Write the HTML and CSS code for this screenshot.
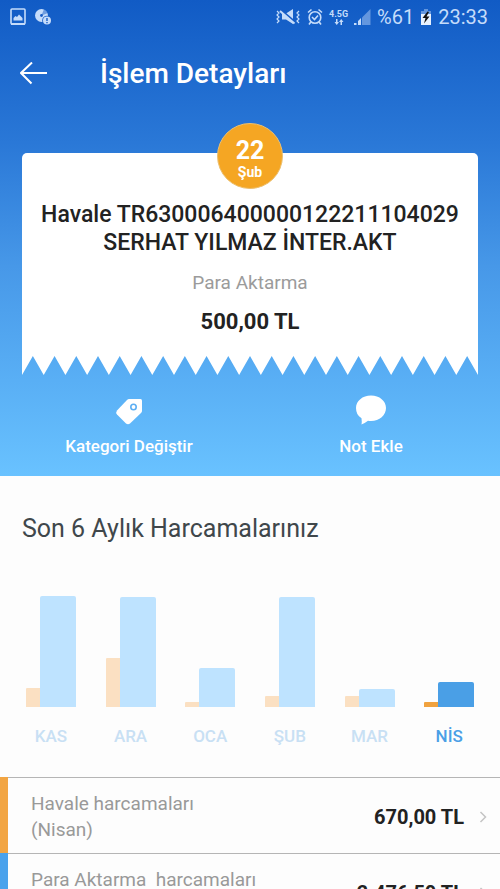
FILE: index.html
```html
<!DOCTYPE html>
<html lang="tr">
<head>
<meta charset="utf-8">
<meta name="viewport" content="width=device-width, initial-scale=1">
<title>İşlem Detayları</title>
<link rel="stylesheet" href="styles.css">
</head>
<body>
<div class="screen">
  <section class="hero">
    <div class="status">
      <div class="status-group">
        <svg width="16" height="18" viewBox="0 0 16 18"><rect x="1" y="1" width="14" height="15" rx="1" fill="none" stroke="currentColor" stroke-width="1.600"/><path d="M3.500 12.500V10L5.500 8l1.500 1 2-2.500 2 2 1.500 1.500v2.500zM1 15h14v2H1z" fill="currentColor"/></svg>
        <svg width="18" height="18" viewBox="0 0 18 18"><circle cx="7.500" cy="7.500" r="6.500" fill="currentColor"/><path d="M7.500 7.500L10 1l4 4z" fill="#175dc6" opacity=".5"/><circle cx="7.500" cy="7.500" r="1.400" fill="#175dc6"/><circle cx="13" cy="12.500" r="4.800" fill="#175dc6"/><circle cx="13" cy="12.500" r="4" fill="currentColor"/><path d="M13 10v3M13 14v1.200" stroke="#175dc6" stroke-width="1.400"/></svg>
      </div>
      <div class="status-group status-right">
        <svg width="26" height="18" viewBox="0 0 26 18"><path d="M7 5.500h4l7-4.500V16l-7-4.500H7z" fill="currentColor"/><path d="M5.500 1.500l14 12" stroke="#165cc6" stroke-width="2"/><path d="M5 3l14.500 12.500" stroke="currentColor" stroke-width="2"/><path d="M2 3l2 2-2 2 2 2-2 2 2 2-2 2M24 3l-2 2 2 2-2 2 2 2-2 2 2 2" fill="none" stroke="currentColor" stroke-width="1.200"/></svg>
        <svg width="16" height="18" viewBox="0 0 16 18"><circle cx="8" cy="9.500" r="5.800" fill="none" stroke="currentColor" stroke-width="1.600"/><path d="M1 4.500L4.500 1.500M15 4.500L11.500 1.500M3.800 14L2 16.500M12.200 14l1.800 2.500M5 9l2.500 2.500L11 7.500" fill="none" stroke="currentColor" stroke-width="1.600"/></svg>
        <span class="net"><span>4.5G</span><svg width="10" height="6" viewBox="0 0 10 6"><path d="M2 0h1.500v3H5L2.750 6 .500 3H2zM6.500 6H8V3h1.500L7.250 0 5 3h1.500z" fill="currentColor"/></svg></span>
        <svg width="17" height="18" viewBox="0 0 17 18"><path d="M16.500 1v16H8V9.500z" fill="currentColor" opacity=".45"/><path d="M0 17v-2h2.500v2zM4 17v-4l3-3v7z" fill="currentColor"/></svg>
        <span class="status-text">%61</span>
        <svg width="12" height="18" viewBox="0 0 12 18"><path d="M1 3h3V1h4v2h3v3H1z" fill="currentColor" opacity=".45"/><path d="M1 6h10v11H1z" fill="#e8f2ff"/><path d="M7.500 3.500L2.500 10h3L4 15.500 9.500 8.500H6.500L9 4z" fill="#111"/></svg>
        <span class="status-text">23:33</span>
      </div>
    </div>
    <header class="bar">
      <button class="back" type="button" aria-label="Geri"><svg width="28" height="24" viewBox="0 0 28 24"><path d="M27 11H1M12 .500L1 11l10.500 10.500" fill="none" stroke="currentColor" stroke-width="2"/></svg></button>
      <h1>İşlem Detayları</h1>
    </header>
    <div class="receipt">
      <div class="paper">
        <div class="date"><span class="day">22</span><span class="month">Şub</span></div>
        <h2>Havale TR630006400000122211104029 SERHAT YILMAZ İNTER.AKT</h2>
        <p class="category">Para Aktarma</p>
        <p class="total">500,00 TL</p>
      </div>
      <svg class="teeth" viewBox="0 0 420 20" preserveAspectRatio="none"><path fill="#fff" d="M0 0V20L10 1 20 20 30 1 40 20 50 1 60 20 70 1 80 20 90 1 100 20 110 1 120 20 130 1 140 20 150 1 160 20 170 1 180 20 190 1 200 20 210 1 220 20 230 1 240 20 250 1 260 20 270 1 280 20 290 1 300 20 310 1 320 20 330 1 340 20 350 1 360 20 370 1 380 20 390 1 400 20 410 1 420 20V0z"/></svg>
    </div>
    <div class="actions">
      <button type="button"><svg width="30" height="30" viewBox="0 0 30 30"><path fill="currentColor" fill-rule="evenodd" d="M15 4H26.500Q28 4 28 5.500V16Q28 17 27 18L16 28.500Q14 30 12 28.500L3 19.500Q1.500 17.500 3 15.500L13 5Q14 4 15 4z"/><circle cx="19.500" cy="12" r="2.700" fill="none" stroke="#5daff3" stroke-width="1.600"/></svg>Kategori Değiştir</button>
      <button type="button"><svg width="30" height="30" viewBox="0 0 30 30"><path fill="currentColor" d="M15 .500C23.500.500 30 6 30 13S23.500 26 15 26q-2 0-3-.300Q9 28 5.500 29.500 6 27 5.500 23.300 0 20 0 13C0 6 6.500.500 15 .500z"/></svg>Not Ekle</button>
    </div>
  </section>

  <section class="spending">
    <h2>Son 6 Aylık Harcamalarınız</h2>
    <div class="chart">
      <div class="month-col"><div class="bars"><i class="small" style="height:19px"></i><i class="large" style="height:111px"></i></div><span>KAS</span></div>
      <div class="month-col"><div class="bars"><i class="small" style="height:49px"></i><i class="large" style="height:110px"></i></div><span>ARA</span></div>
      <div class="month-col"><div class="bars"><i class="small" style="height:5px"></i><i class="large" style="height:39px"></i></div><span>OCA</span></div>
      <div class="month-col"><div class="bars"><i class="small" style="height:11px"></i><i class="large" style="height:110px"></i></div><span>ŞUB</span></div>
      <div class="month-col"><div class="bars"><i class="small" style="height:11px"></i><i class="large" style="height:18px"></i></div><span>MAR</span></div>
      <div class="month-col current"><div class="bars"><i class="small" style="height:5px"></i><i class="large" style="height:25px"></i></div><span>NİS</span></div>
    </div>
  </section>

  <nav class="rows">
    <a class="row orange" href="#havale"><span class="label">Havale harcamaları<br>(Nisan)</span><span class="amount">670,00 TL</span><svg width="8" height="12" viewBox="0 0 8 12"><path d="M1.500 1L6.500 6l-5 5" fill="none" stroke="#c4c4c4" stroke-width="1.500"/></svg></a>
    <a class="row blue" href="#aktarma"><span class="label">Para Aktarma&nbsp; harcamaları<br>(Nisan)</span><span class="amount">2.476,50 TL</span><svg width="8" height="12" viewBox="0 0 8 12"><path d="M1.500 1L6.500 6l-5 5" fill="none" stroke="#c4c4c4" stroke-width="1.500"/></svg></a>
  </nav>
</div>
</body>
</html>
```
FILE: styles.css
```css
* { box-sizing: border-box; }
body { margin: 0; background: #fdfdfd; font-family: Roboto, "Liberation Sans", sans-serif; }
h1, h2, p { margin: 0; font-weight: 500; }
svg { display: block; flex: none; }
button { border: 0; padding: 0; background: none; color: inherit; font: inherit; }
.screen { height: 100vh; overflow: hidden; }
.hero { background: linear-gradient(#115bc5, #2a78d7 30%, #4798e8 56%, #59aff5 80%, #69c2ff); color: #fff; padding-bottom: 18px; }

.status { display: flex; justify-content: space-between; align-items: center; height: 34px; padding: 0 12px 0 10px; color: #c5dcfa; }
.status-group { display: flex; align-items: center; gap: 8px; }
.status-right { gap: 6px; }
.status-text { font-size: 20px; line-height: 24px; }
.net { display: flex; flex-direction: column; align-items: center; font-size: 9px; line-height: 10px; font-weight: 700; }

.bar { display: flex; align-items: center; height: 80px; padding-left: 20px; gap: 52px; }
.bar h1 { font-size: 28px; line-height: 32px; }
.back { display: flex; }

.receipt { margin: 39px 22px 0; }
.paper { display: flex; flex-direction: column; align-items: center; height: 202px; background: #fff; border-radius: 5px 5px 0 0; color: #222; text-align: center; }
.date { display: flex; flex-direction: column; justify-content: center; align-items: center; flex: none; width: 66px; height: 66px; margin-top: -30px; padding-top: 7px; border-radius: 50%; background: #f5a623; border: 1px solid #ecc070; color: #fff; font-weight: 700; }
.day { font-size: 25px; line-height: 24px; }
.month { font-size: 14px; line-height: 18px; }
.paper h2 { margin-top: 12px; padding: 0 8px; font-size: 23px; line-height: 28px; }
.category { margin-top: 14px; font-size: 19px; line-height: 24px; font-weight: 400; color: #9b9b9b; }
.total { margin-top: 14px; font-size: 22px; line-height: 26px; font-weight: 700; }
.teeth { width: 100%; height: 20px; }

.actions { display: flex; margin-top: 20px; padding: 0 8px; }
.actions button { flex: 1; display: flex; flex-direction: column; align-items: center; gap: 9px; font-size: 17px; line-height: 24px; font-weight: 500; }

.spending h2 { padding: 37px 22px 0; font-size: 25px; line-height: 32px; font-weight: 400; color: #40474b; }
.chart { display: flex; padding: 50px 11px 0; }
.month-col { flex: 1; display: flex; flex-direction: column; align-items: center; gap: 18px; font-size: 17px; line-height: 22px; color: #c8e0f4; font-weight: 500; }
.bars { display: flex; align-items: flex-end; height: 112px; }
.small { width: 14px; background: #fbe0c2; border-radius: 1px 0 0; }
.large { width: 36px; background: #bee3ff; border-radius: 2px 2px 0 0; }
.current { color: #4a9fe6; }
.current .small { background: #f0a23f; }
.current .large { background: #4a9fe6; }

.rows { margin-top: 30px; }
.row { display: flex; align-items: center; min-height: 76px; padding: 3px 13px 0 0; border-left: 8px solid; background: linear-gradient(#b5b5b5, #b5b5b5) top / 100% 1px no-repeat; text-decoration: none; }
.orange { border-left-color: #f2a543; }
.blue { border-left-color: #4aa2ec; }
.label { flex: 1; padding-left: 23px; font-size: 19px; line-height: 26px; color: #999; }
.amount { margin-right: 15px; font-size: 20px; line-height: 26px; font-weight: 700; color: #222; }
```
